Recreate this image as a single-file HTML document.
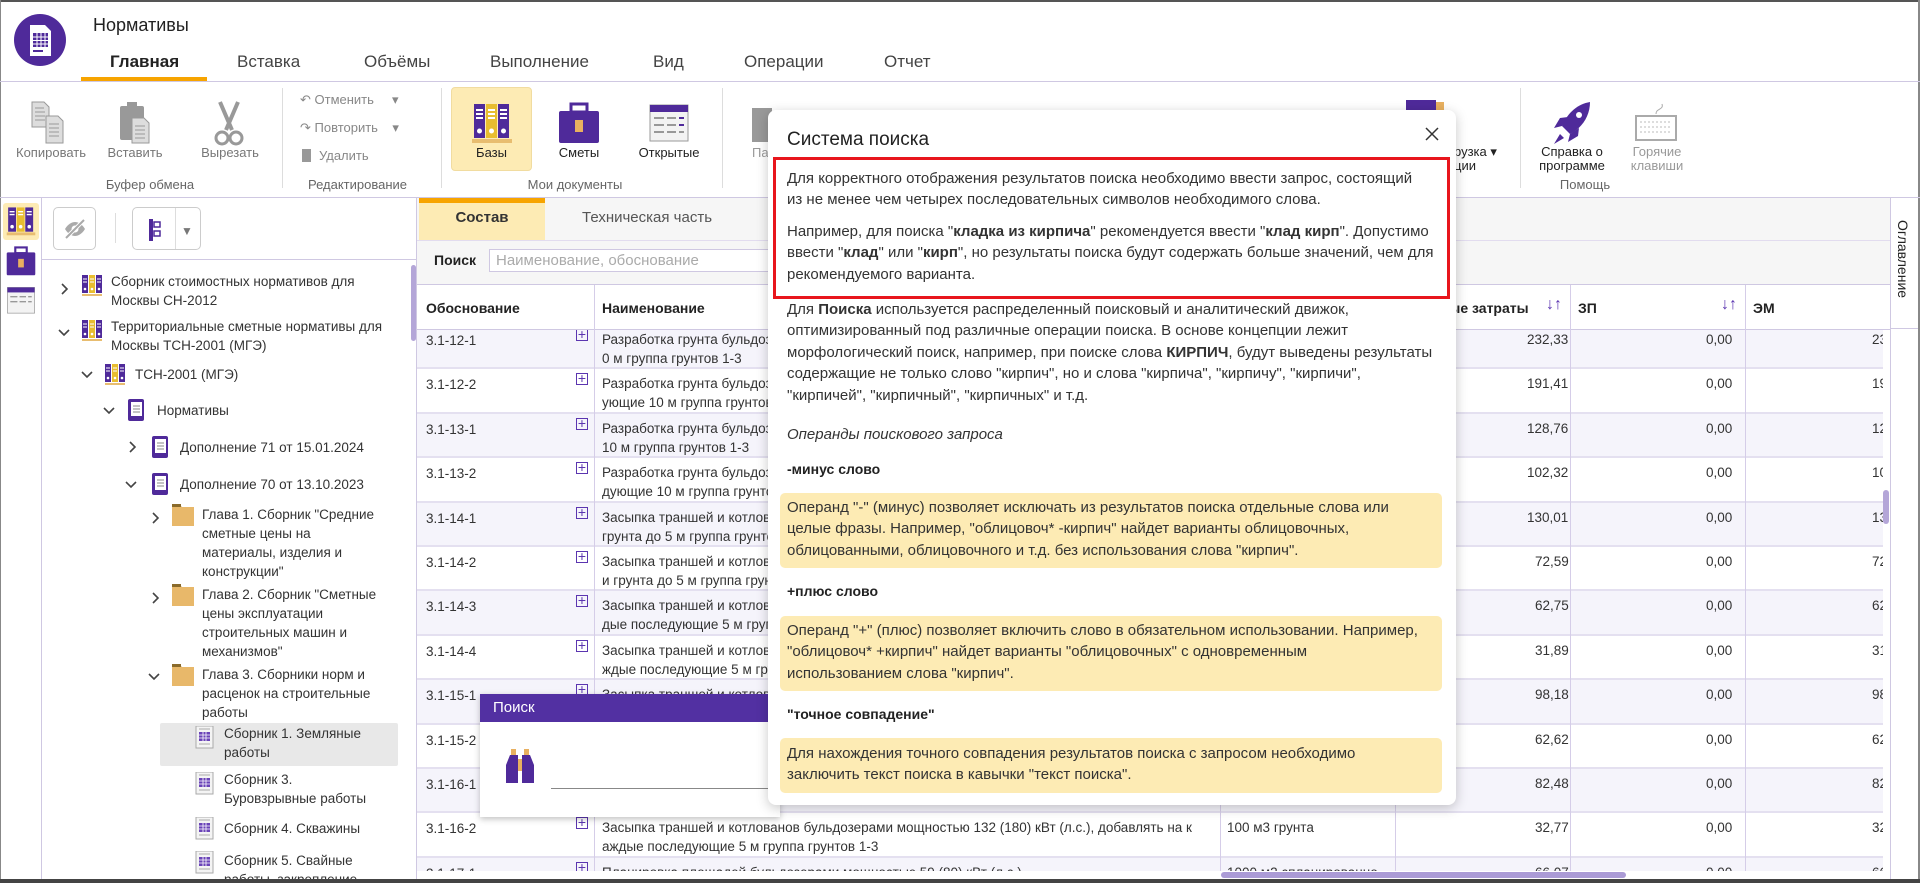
<!DOCTYPE html>
<html><head><meta charset="utf-8">
<style>
*{box-sizing:border-box;margin:0;padding:0}
body{width:1920px;height:883px;overflow:hidden;background:#fff;font-family:"Liberation Sans",sans-serif;color:#333;position:relative}
.a{position:absolute;white-space:nowrap}
.rl{font-size:13px;color:#777;text-align:center}
.gl{font-size:13px;color:#666;text-align:center}
.tab{font-size:17px;color:#444;top:52px}
.tr{font-size:13.5px;color:#333;line-height:19px;white-space:normal}
.cell{font-size:13.5px;color:#333;line-height:19px}
.dt{font-size:15px;color:#333;line-height:21.4px;white-space:normal}
.yb{position:absolute;left:780px;width:662px;background:#fdebb4;border-radius:5px;padding:0 16px 0 7px}
.hd{font-size:14px;font-weight:bold;color:#222}
.pl{position:absolute;left:159px;top:4px;color:#5b35b0;font-size:14px;border:1px solid #5b35b0;width:12px;height:12px;line-height:9px;text-align:center}
</style></head><body>
<div class="a" style="left:0;top:0;width:1920px;height:2px;background:#555"></div>
<div class="a" style="left:0;top:0;width:1px;height:883px;background:#888"></div>
<div class="a" style="left:1918px;top:0;width:2px;height:883px;background:#888"></div>
<div class="a" style="left:0;top:879px;width:1920px;height:4px;background:#444"></div>

<svg class="a" style="left:13px;top:13px" width="54" height="54" viewBox="0 0 54 54">
<circle cx="27" cy="27" r="26" fill="#4f2a9a"/>
<path d="M17 12h15l6 6v25h-21z" fill="#fff"/>
<rect x="20" y="20" width="15" height="14" fill="#4f2a9a"/>
<g stroke="#fff" stroke-width="1"><path d="M20 24h15M20 27.5h15M20 31h15M24 20v14M28 20v14M32 20v14"/></g>
<rect x="20" y="37" width="10" height="2" fill="#4f2a9a"/>
</svg>
<div class="a" style="left:93px;top:15px;font-size:18px;color:#222">Нормативы</div>
<div class="a tab" style="left:110px;font-weight:bold;color:#222">Главная</div>
<div class="a" style="left:81px;top:77px;width:126px;height:4px;background:#f7a400"></div>
<div class="a tab" style="left:237px">Вставка</div>
<div class="a tab" style="left:364px">Объёмы</div>
<div class="a tab" style="left:490px">Выполнение</div>
<div class="a tab" style="left:653px">Вид</div>
<div class="a tab" style="left:744px">Операции</div>
<div class="a tab" style="left:884px">Отчет</div>
<div class="a" style="left:0;top:81px;width:1920px;height:1px;background:#cfc8e2"></div>

<svg class="a" style="left:30px;top:100px" width="42" height="48" viewBox="0 0 42 48"><path d="M2 2h12l5 5v20H2z" fill="#ddd" stroke="#999"/><path d="M16 16h12l5 5v22H16z" fill="#ddd" stroke="#999"/><path d="M5 8h9M5 12h10M5 16h10M5 20h10M19 24h10M19 28h10M19 32h10M19 36h10" stroke="#999"/></svg>
<div class="a rl" style="left:10px;top:145px;width:82px">Копировать</div>
<svg class="a" style="left:116px;top:100px" width="38" height="48" viewBox="0 0 38 48"><rect x="4" y="6" width="24" height="34" rx="2" fill="#999"/><rect x="11" y="2" width="10" height="7" fill="#999"/><path d="M16 18h12l5 5v20H16z" fill="#ddd" stroke="#999"/><path d="M19 26h10M19 30h10M19 34h10M19 38h10" stroke="#999"/></svg>
<div class="a rl" style="left:100px;top:145px;width:70px">Вставить</div>
<svg class="a" style="left:212px;top:100px" width="34" height="48" viewBox="0 0 34 48"><path d="M8 2l12 28M26 2L14 30" stroke="#999" stroke-width="4"/><circle cx="10" cy="38" r="6" fill="none" stroke="#999" stroke-width="3"/><circle cx="24" cy="38" r="6" fill="none" stroke="#999" stroke-width="3"/></svg>
<div class="a rl" style="left:190px;top:145px;width:80px">Вырезать</div>
<div class="a gl" style="left:60px;top:177px;width:180px">Буфер обмена</div>
<div class="a" style="left:282px;top:88px;width:1px;height:100px;background:#ddd"></div>
<div class="a rl" style="left:300px;top:92px;text-align:left;color:#888">↶ Отменить &nbsp;&nbsp;&nbsp;&nbsp;▾</div>
<div class="a rl" style="left:300px;top:120px;text-align:left;color:#888">↷ Повторить &nbsp;&nbsp;&nbsp;▾</div>
<div class="a rl" style="left:302px;top:148px;text-align:left;color:#888"><span style="display:inline-block;width:9px;height:13px;background:#999;margin-right:8px;vertical-align:-2px"></span>Удалить</div>
<div class="a gl" style="left:300px;top:177px;width:115px">Редактирование</div>
<div class="a" style="left:441px;top:88px;width:1px;height:100px;background:#ddd"></div>
<div class="a" style="left:451px;top:87px;width:81px;height:84px;background:#fdebb4;border:1px solid #f1dca0;border-radius:4px"></div>
<svg class="a" style="left:472px;top:102px" width="40" height="42" viewBox="0 0 40 42"><rect x="2" y="2" width="11" height="34" fill="#4f2a9a"/><rect x="14" y="2" width="11" height="34" fill="#e8bd30"/><rect x="26" y="2" width="11" height="34" fill="#4f2a9a"/><path d="M4 8h7M4 12h7M4 16h7M16 8h7M16 12h7M16 16h7M28 8h7M28 12h7M28 16h7" stroke="#fff" stroke-width="2"/><circle cx="7.5" cy="29" r="2.5" fill="#fff"/><circle cx="19.5" cy="29" r="2.5" fill="#fff"/><circle cx="31.5" cy="29" r="2.5" fill="#fff"/><rect x="0" y="37" width="40" height="4" fill="#e8bd70"/></svg>
<div class="a rl" style="left:451px;top:145px;width:81px;color:#222">Базы</div>
<svg class="a" style="left:558px;top:102px" width="42" height="42" viewBox="0 0 42 42"><rect x="13" y="2" width="16" height="8" fill="none" stroke="#4f2a9a" stroke-width="3"/><rect x="1" y="9" width="40" height="32" rx="2" fill="#4f2a9a"/><rect x="17" y="18" width="8" height="12" fill="#e8b060"/></svg>
<div class="a rl" style="left:549px;top:145px;width:60px;color:#222">Сметы</div>
<svg class="a" style="left:648px;top:103px" width="42" height="42" viewBox="0 0 42 42"><rect x="2" y="2" width="38" height="36" fill="#f3f3f3" stroke="#999"/><rect x="2" y="2" width="38" height="7" fill="#4f2a9a"/><path d="M6 15h10M19 15h9M31 15h5M6 22h10M19 22h9M31 22h5M6 29h10M19 29h9M31 29h5" stroke="#999" stroke-width="2"/><path d="M31 15h5M31 22h5" stroke="#4f2a9a" stroke-width="2"/></svg>
<div class="a rl" style="left:630px;top:145px;width:78px;color:#222">Открытые</div>
<div class="a gl" style="left:500px;top:177px;width:150px">Мои документы</div>
<div class="a" style="left:722px;top:88px;width:1px;height:100px;background:#ddd"></div>
<svg class="a" style="left:752px;top:102px" width="20" height="40"><rect x="0" y="6" width="20" height="34" fill="#999"/></svg>
<div class="a rl" style="left:752px;top:145px;color:#999">Па</div>
<div class="a rl" style="left:1454px;top:145px;text-align:left;color:#222;line-height:14px">рузка ▾<br>ции</div>
<svg class="a" style="left:1406px;top:100px" width="40" height="20"><rect x="0" y="0" width="30" height="20" fill="#4f2a9a"/><rect x="30" y="2" width="8" height="18" fill="#e8b060"/></svg>
<div class="a" style="left:1520px;top:88px;width:1px;height:100px;background:#ddd"></div>
<svg class="a" style="left:1550px;top:100px" width="44" height="46" viewBox="0 0 44 46"><path d="M40 2C28 4 18 12 12 26l8 8C32 28 40 16 40 2z" fill="#4f2a9a"/><path d="M12 26l-8 2 6-10 8-1zM20 34l-2 8 10-6 1-8z" fill="#4f2a9a"/><path d="M10 34l-6 10 10-6z" fill="#4f2a9a"/><circle cx="29" cy="15" r="3" fill="#fff"/></svg>
<div class="a rl" style="left:1532px;top:145px;width:80px;color:#222;line-height:14px">Справка о<br>программе</div>
<svg class="a" style="left:1634px;top:102px" width="44" height="40" viewBox="0 0 44 40"><path d="M22 12c0-6 8-4 6-10" stroke="#aaa" fill="none"/><rect x="2" y="14" width="40" height="24" fill="none" stroke="#aaa" stroke-width="2"/><path d="M6 20h32M6 25h32M6 30h32" stroke="#bbb" stroke-dasharray="2 2"/></svg>
<div class="a rl" style="left:1620px;top:145px;width:74px;color:#999;line-height:14px">Горячие<br>клавиши</div>
<div class="a gl" style="left:1545px;top:177px;width:80px">Помощь</div>
<div class="a" style="left:0;top:197px;width:1920px;height:1px;background:#cfc8e2"></div>

<div class="a" style="left:41px;top:198px;width:1px;height:681px;background:#cfc8e2"></div>
<div class="a" style="left:3px;top:203px;width:36px;height:37px;background:#fdebb4;border-radius:3px"></div>
<svg class="a" style="left:6px;top:206px" width="30" height="30" viewBox="0 0 40 42"><rect x="2" y="2" width="11" height="34" fill="#4f2a9a"/><rect x="14" y="2" width="11" height="34" fill="#e8bd30"/><rect x="26" y="2" width="11" height="34" fill="#4f2a9a"/><path d="M4 8h7M4 12h7M16 8h7M16 12h7M28 8h7M28 12h7" stroke="#fff" stroke-width="2"/><circle cx="7.5" cy="29" r="2.5" fill="#fff"/><circle cx="19.5" cy="29" r="2.5" fill="#fff"/><circle cx="31.5" cy="29" r="2.5" fill="#fff"/><rect x="0" y="37" width="40" height="4" fill="#e8bd70"/></svg>
<svg class="a" style="left:5px;top:246px" width="32" height="30" viewBox="0 0 42 42"><rect x="13" y="2" width="16" height="8" fill="none" stroke="#4f2a9a" stroke-width="3"/><rect x="1" y="9" width="40" height="32" rx="2" fill="#4f2a9a"/><rect x="17" y="18" width="8" height="12" fill="#e8b060"/></svg>
<svg class="a" style="left:5px;top:286px" width="32" height="30" viewBox="0 0 42 42"><rect x="2" y="2" width="38" height="36" fill="#f3f3f3" stroke="#999"/><rect x="2" y="2" width="38" height="7" fill="#4f2a9a"/><path d="M6 15h10M19 15h9M31 15h5M6 22h10M19 22h9M31 22h5" stroke="#999" stroke-width="2"/></svg>

<div class="a" style="left:53px;top:207px;width:43px;height:43px;border:1px solid #ccc;border-radius:5px"></div>
<svg class="a" style="left:62px;top:216px" width="26" height="26" viewBox="0 0 26 26"><path d="M3 13c3-5 7-7 10-7s7 2 10 7c-3 5-7 7-10 7s-7-2-10-7z" fill="#aaa"/><circle cx="13" cy="13" r="3.5" fill="#fff"/><path d="M4 22L22 4" stroke="#fff" stroke-width="4"/><path d="M4 22L22 4" stroke="#aaa" stroke-width="2"/></svg>
<div class="a" style="left:115px;top:213px;width:1px;height:30px;background:#ddd"></div>
<div class="a" style="left:132px;top:207px;width:69px;height:43px;border:1px solid #ccc;border-radius:5px"></div>
<div class="a" style="left:175px;top:208px;width:1px;height:41px;background:#ddd"></div>
<svg class="a" style="left:148px;top:218px" width="14" height="24"><rect x="1" y="1" width="4" height="22" fill="#4f2a9a"/><rect x="6" y="4" width="6" height="5" fill="none" stroke="#4f2a9a" stroke-width="1.5"/><rect x="6" y="13" width="6" height="5" fill="none" stroke="#4f2a9a" stroke-width="1.5"/></svg>
<div class="a" style="left:181px;top:224px;font-size:12px;color:#777">▼</div>
<div class="a" style="left:42px;top:259px;width:375px;height:1px;background:#cfc8e2"></div>
<div class="a" style="left:411px;top:265px;width:5px;height:76px;background:#b4a6d8;border-radius:3px"></div>
<div class="a" style="left:416px;top:198px;width:1px;height:681px;background:#cfc8e2"></div>

<svg width="0" height="0" style="position:absolute"><defs>
<g id="db"><rect x="0" y="0" width="6" height="18" fill="#4f2a9a"/><rect x="7" y="0" width="6" height="18" fill="#e8bd30"/><rect x="14" y="0" width="6" height="18" fill="#4f2a9a"/><path d="M1 4h4M8 4h4M15 4h4M1 7h4M8 7h4M15 7h4" stroke="#fff"/><circle cx="3" cy="14" r="1.3" fill="#fff"/><circle cx="10" cy="14" r="1.3" fill="#fff"/><circle cx="17" cy="14" r="1.3" fill="#fff"/><rect x="0" y="19" width="20" height="2" fill="#e8bd70"/></g>
<g id="bk"><rect x="2" y="0" width="16" height="22" rx="2" fill="#4f2a9a"/><rect x="5" y="3" width="11" height="14" fill="#fff"/><path d="M7 7h7M7 10h7M7 13h7" stroke="#888"/></g>
<g id="fd"><path d="M0 3h8l2 2h12v19H0z" fill="#e8b86a"/><rect x="0" y="2" width="9" height="3" fill="#8a6a2a"/></g>
<g id="sb"><rect x="1" y="0" width="17" height="22" fill="#f4f4f4" stroke="#aaa"/><rect x="4" y="6" width="11" height="9" fill="#6a44b8"/><path d="M4 9h11M4 12h11M8 6v9M11 6v9" stroke="#fff" stroke-width=".8"/><path d="M4 3h11M4 18h11" stroke="#aaa"/></g>
<path id="cr" d="M2 1l5 5-5 5" fill="none" stroke="#444" stroke-width="1.6"/>
<path id="cd" d="M1 2l5 5 5-5" fill="none" stroke="#444" stroke-width="1.6"/>
</defs></svg>

<svg class="a" style="left:60px;top:283px" width="12" height="12"><use href="#cr"/></svg>
<svg class="a" style="left:82px;top:275px" width="22" height="22"><use href="#db"/></svg>
<div class="a tr" style="left:111px;top:272px;width:290px">Сборник стоимостных нормативов для Москвы СН-2012</div>
<svg class="a" style="left:58px;top:328px" width="12" height="12"><use href="#cd"/></svg>
<svg class="a" style="left:82px;top:320px" width="22" height="22"><use href="#db"/></svg>
<div class="a tr" style="left:111px;top:317px;width:290px">Территориальные сметные нормативы для Москвы ТСН-2001 (МГЭ)</div>
<svg class="a" style="left:81px;top:370px" width="12" height="12"><use href="#cd"/></svg>
<svg class="a" style="left:105px;top:364px" width="22" height="22"><use href="#db"/></svg>
<div class="a tr" style="left:135px;top:365px">ТСН-2001 (МГЭ)</div>
<svg class="a" style="left:103px;top:406px" width="12" height="12"><use href="#cd"/></svg>
<svg class="a" style="left:126px;top:399px" width="22" height="24"><use href="#bk"/></svg>
<div class="a tr" style="left:157px;top:401px">Нормативы</div>
<svg class="a" style="left:128px;top:441px" width="12" height="12"><use href="#cr"/></svg>
<svg class="a" style="left:150px;top:436px" width="22" height="24"><use href="#bk"/></svg>
<div class="a tr" style="left:180px;top:438px">Дополнение 71 от 15.01.2024</div>
<svg class="a" style="left:125px;top:480px" width="12" height="12"><use href="#cd"/></svg>
<svg class="a" style="left:150px;top:473px" width="22" height="24"><use href="#bk"/></svg>
<div class="a tr" style="left:180px;top:475px">Дополнение 70 от 13.10.2023</div>
<svg class="a" style="left:151px;top:512px" width="12" height="12"><use href="#cr"/></svg>
<svg class="a" style="left:172px;top:502px" width="22" height="26"><use href="#fd"/></svg>
<div class="a tr" style="left:202px;top:505px;width:180px">Глава 1. Сборник "Средние сметные цены на материалы, изделия и конструкции"</div>
<svg class="a" style="left:151px;top:592px" width="12" height="12"><use href="#cr"/></svg>
<svg class="a" style="left:172px;top:582px" width="22" height="26"><use href="#fd"/></svg>
<div class="a tr" style="left:202px;top:585px;width:180px">Глава 2. Сборник "Сметные цены эксплуатации строительных машин и механизмов"</div>
<svg class="a" style="left:148px;top:672px" width="12" height="12"><use href="#cd"/></svg>
<svg class="a" style="left:172px;top:662px" width="22" height="26"><use href="#fd"/></svg>
<div class="a tr" style="left:202px;top:665px;width:185px">Глава 3. Сборники норм и расценок на строительные работы</div>
<div class="a" style="left:160px;top:723px;width:238px;height:43px;background:#e8e8e8;border-radius:2px"></div>
<svg class="a" style="left:195px;top:726px" width="20" height="24"><use href="#sb"/></svg>
<div class="a tr" style="left:224px;top:724px;width:160px">Сборник 1. Земляные работы</div>
<svg class="a" style="left:195px;top:772px" width="20" height="24"><use href="#sb"/></svg>
<div class="a tr" style="left:224px;top:770px;width:160px">Сборник 3. Буровзрывные работы</div>
<svg class="a" style="left:195px;top:817px" width="20" height="24"><use href="#sb"/></svg>
<div class="a tr" style="left:224px;top:819px">Сборник 4. Скважины</div>
<svg class="a" style="left:195px;top:851px" width="20" height="24"><use href="#sb"/></svg>
<div class="a tr" style="left:224px;top:851px;width:160px;height:28px;overflow:hidden">Сборник 5. Свайные работы, закрепление</div>

<div class="a" style="left:417px;top:198px;width:1473px;height:131px;background:#f6f6f6"></div>
<div class="a" style="left:419px;top:198px;width:126px;height:42px;background:#fdebb4;border-top:5px solid #f7a400"></div>
<div class="a" style="left:419px;top:209px;width:126px;text-align:center;font-size:15px;font-weight:bold;color:#333">Состав</div>
<div class="a" style="left:582px;top:209px;font-size:15px;color:#555">Техническая часть</div>
<div class="a" style="left:417px;top:240px;width:1473px;height:1px;background:#e2dcef"></div>
<div class="a" style="left:434px;top:252px;font-size:14px;font-weight:bold;color:#222">Поиск</div>
<div class="a" style="left:489px;top:249px;width:300px;height:23px;border:1px solid #cfc8e2;background:#fff;padding:2px 6px;font-size:15px;color:#aaa">Наименование, обоснование</div>
<div class="a" style="left:417px;top:284px;width:1473px;height:1px;background:#cfc8e2"></div>
<div class="a" style="left:417px;top:285px;width:1473px;height:45px;background:#fff"></div>
<div class="a" style="left:426px;top:300px;font-size:14px;font-weight:bold;color:#222">Обоснование</div>
<div class="a" style="left:602px;top:300px;font-size:14px;font-weight:bold;color:#222">Наименование</div>
<div class="a" style="left:1405px;top:300px;font-size:14px;font-weight:bold;color:#222">Сметные затраты</div>
<div class="a" style="left:1546px;top:296px;font-size:16px;font-weight:bold;color:#5b35b0">↓↑</div>
<div class="a" style="left:1578px;top:300px;font-size:14px;font-weight:bold;color:#222">ЗП</div>
<div class="a" style="left:1721px;top:296px;font-size:16px;font-weight:bold;color:#5b35b0">↓↑</div>
<div class="a" style="left:1753px;top:300px;font-size:14px;font-weight:bold;color:#222">ЭМ</div>
<div class="a" style="left:417px;top:329px;width:1473px;height:1px;background:#cfc8e2"></div>

<div class="a" style="left:417px;top:330px;width:1466px;height:541px;overflow:hidden">
<div style="position:absolute;left:0;top:-5px;width:1466px">
<div style="position:relative;height:44.4px;background:#f5f4fb;border-bottom:2px solid #e4e0f0"><span class="a cell" style="left:9px;top:6px">3.1-12-1</span><span class="pl">+</span><span class="a cell" style="left:185px;top:5px">Разработка грунта бульдозерами мощностью 59 (80) кВт (л.с.) с перемещением грунта до 1<br>0 м группа грунтов 1-3</span><span class="a cell" style="left:810px;top:5px">1000 м3 грунта</span><span class="a cell" style="left:1110px;top:5px">232,33</span><span class="a cell" style="left:1289px;top:5px">0,00</span><span class="a cell" style="left:1455px;top:5px">232,33</span></div>
<div style="position:relative;height:44.4px;background:#fff;border-bottom:2px solid #e4e0f0"><span class="a cell" style="left:9px;top:6px">3.1-12-2</span><span class="pl">+</span><span class="a cell" style="left:185px;top:5px">Разработка грунта бульдозерами мощностью 59 (80) кВт (л.с.), добавлять на каждые послед<br>ующие 10 м группа грунтов 1-3</span><span class="a cell" style="left:1110px;top:5px">191,41</span><span class="a cell" style="left:1289px;top:5px">0,00</span><span class="a cell" style="left:1455px;top:5px">191,41</span></div>
<div style="position:relative;height:44.4px;background:#f5f4fb;border-bottom:2px solid #e4e0f0"><span class="a cell" style="left:9px;top:6px">3.1-13-1</span><span class="pl">+</span><span class="a cell" style="left:185px;top:5px">Разработка грунта бульдозерами мощностью 79 (108) кВт (л.с.) с перемещением грунта до<br>10 м группа грунтов 1-3</span><span class="a cell" style="left:1110px;top:5px">128,76</span><span class="a cell" style="left:1289px;top:5px">0,00</span><span class="a cell" style="left:1455px;top:5px">128,76</span></div>
<div style="position:relative;height:44.4px;background:#fff;border-bottom:2px solid #e4e0f0"><span class="a cell" style="left:9px;top:6px">3.1-13-2</span><span class="pl">+</span><span class="a cell" style="left:185px;top:5px">Разработка грунта бульдозерами мощностью 79 (108) кВт (л.с.), добавлять на каждые после<br>дующие 10 м группа грунтов 1-3</span><span class="a cell" style="left:1110px;top:5px">102,32</span><span class="a cell" style="left:1289px;top:5px">0,00</span><span class="a cell" style="left:1455px;top:5px">102,32</span></div>
<div style="position:relative;height:44.4px;background:#f5f4fb;border-bottom:2px solid #e4e0f0"><span class="a cell" style="left:9px;top:6px">3.1-14-1</span><span class="pl">+</span><span class="a cell" style="left:185px;top:5px">Засыпка траншей и котлованов бульдозерами мощностью 59 (80) кВт (л.с.) с перемещение<br>грунта до 5 м группа грунтов 1-3</span><span class="a cell" style="left:1110px;top:5px">130,01</span><span class="a cell" style="left:1289px;top:5px">0,00</span><span class="a cell" style="left:1455px;top:5px">130,01</span></div>
<div style="position:relative;height:44.4px;background:#fff;border-bottom:2px solid #e4e0f0"><span class="a cell" style="left:9px;top:6px">3.1-14-2</span><span class="pl">+</span><span class="a cell" style="left:185px;top:5px">Засыпка траншей и котлованов бульдозерами мощностью 59 (80) кВт (л.с.) с перемещение<br>и грунта до 5 м группа грунтов 1-3</span><span class="a cell" style="left:1118px;top:5px">72,59</span><span class="a cell" style="left:1289px;top:5px">0,00</span><span class="a cell" style="left:1455px;top:5px">72,59</span></div>
<div style="position:relative;height:44.4px;background:#f5f4fb;border-bottom:2px solid #e4e0f0"><span class="a cell" style="left:9px;top:6px">3.1-14-3</span><span class="pl">+</span><span class="a cell" style="left:185px;top:5px">Засыпка траншей и котлованов бульдозерами мощностью 59 (80) кВт (л.с.), добавлять на каж<br>дые последующие 5 м группа грунтов 1-3</span><span class="a cell" style="left:1118px;top:5px">62,75</span><span class="a cell" style="left:1289px;top:5px">0,00</span><span class="a cell" style="left:1455px;top:5px">62,75</span></div>
<div style="position:relative;height:44.4px;background:#fff;border-bottom:2px solid #e4e0f0"><span class="a cell" style="left:9px;top:6px">3.1-14-4</span><span class="pl">+</span><span class="a cell" style="left:185px;top:5px">Засыпка траншей и котлованов бульдозерами мощностью 59 (80) кВт (л.с.), добавлять на ка<br>ждые последующие 5 м группа грунтов 1-3</span><span class="a cell" style="left:1118px;top:5px">31,89</span><span class="a cell" style="left:1289px;top:5px">0,00</span><span class="a cell" style="left:1455px;top:5px">31,89</span></div>
<div style="position:relative;height:44.4px;background:#f5f4fb;border-bottom:2px solid #e4e0f0"><span class="a cell" style="left:9px;top:6px">3.1-15-1</span><span class="pl">+</span><span class="a cell" style="left:185px;top:5px">Засыпка траншей и котлованов бульдозерами мощностью 79 (108) кВт (л.с.)</span><span class="a cell" style="left:1118px;top:5px">98,18</span><span class="a cell" style="left:1289px;top:5px">0,00</span><span class="a cell" style="left:1455px;top:5px">98,18</span></div>
<div style="position:relative;height:44.4px;background:#fff;border-bottom:2px solid #e4e0f0"><span class="a cell" style="left:9px;top:6px">3.1-15-2</span><span class="a cell" style="left:1118px;top:5px">62,62</span><span class="a cell" style="left:1289px;top:5px">0,00</span><span class="a cell" style="left:1455px;top:5px">62,62</span></div>
<div style="position:relative;height:44.4px;background:#f5f4fb;border-bottom:2px solid #e4e0f0"><span class="a cell" style="left:9px;top:6px">3.1-16-1</span><span class="a cell" style="left:1118px;top:5px">82,48</span><span class="a cell" style="left:1289px;top:5px">0,00</span><span class="a cell" style="left:1455px;top:5px">82,48</span></div>
<div style="position:relative;height:44.4px;background:#fff;border-bottom:2px solid #e4e0f0"><span class="a cell" style="left:9px;top:6px">3.1-16-2</span><span class="pl">+</span><span class="a cell" style="left:185px;top:5px">Засыпка траншей и котлованов бульдозерами мощностью 132 (180) кВт (л.с.), добавлять на к<br>аждые последующие 5 м группа грунтов 1-3</span><span class="a cell" style="left:810px;top:5px">100 м3 грунта</span><span class="a cell" style="left:1118px;top:5px">32,77</span><span class="a cell" style="left:1289px;top:5px">0,00</span><span class="a cell" style="left:1455px;top:5px">32,77</span></div>
<div style="position:relative;height:44.4px;background:#f5f4fb"><span class="a cell" style="left:9px;top:6px">3.1-17-1</span><span class="pl">+</span><span class="a cell" style="left:185px;top:5px">Планировка площадей бульдозерами мощностью 59 (80) кВт (л.с.)</span><span class="a cell" style="left:810px;top:5px">1000 м2 спланированно</span><span class="a cell" style="left:1118px;top:5px">66,07</span><span class="a cell" style="left:1289px;top:5px">0,00</span><span class="a cell" style="left:1455px;top:5px">66,07</span></div>
</div>
</div>
<div class="a" style="left:594px;top:285px;width:1px;height:586px;background:#d5cde8"></div>
<div class="a" style="left:1220px;top:285px;width:1px;height:586px;background:#d5cde8"></div>
<div class="a" style="left:1395px;top:285px;width:1px;height:586px;background:#d5cde8"></div>
<div class="a" style="left:1570px;top:285px;width:1px;height:586px;background:#d5cde8"></div>
<div class="a" style="left:1745px;top:285px;width:1px;height:586px;background:#d5cde8"></div>
<div class="a" style="left:1883px;top:490px;width:6px;height:34px;background:#b4a6d8;border-radius:3px"></div>
<div class="a" style="left:417px;top:871px;width:1473px;height:8px;background:#fff"></div>
<div class="a" style="left:1221px;top:872px;width:405px;height:6px;background:#ab9bd6;border-radius:3px"></div>
<div class="a" style="left:1890px;top:198px;width:1px;height:681px;background:#cfc8e2"></div>
<div class="a" style="left:1890px;top:328px;width:28px;height:1px;background:#cfc8e2"></div>
<div class="a" style="left:1895px;top:220px;font-size:14px;color:#222;writing-mode:vertical-rl">Оглавление</div>

<div class="a" style="left:480px;top:694px;width:300px;height:123px;background:#fff;box-shadow:0 2px 6px rgba(0,0,0,.25)"></div>
<div class="a" style="left:480px;top:694px;width:300px;height:28px;background:#5230a2"></div>
<div class="a" style="left:493px;top:699px;font-size:15px;color:#fff">Поиск</div>
<svg class="a" style="left:504px;top:749px" width="32" height="36" viewBox="0 0 32 36"><rect x="7" y="0" width="5" height="6" fill="#e8b060"/><rect x="20" y="0" width="5" height="6" fill="#e8b060"/><path d="M6 6h8v28H2V16z M18 6h8l4 10v18H18z" fill="#4f2a9a"/><rect x="14" y="10" width="4" height="12" fill="#e8b060"/></svg>
<div class="a" style="left:551px;top:788px;width:229px;height:1px;background:#888"></div>

<div class="a" style="left:768px;top:110px;width:688px;height:695px;background:#fff;border-radius:8px;box-shadow:0 3px 12px rgba(0,0,0,.22)"></div>
<div class="a" style="left:787px;top:129px;font-size:19px;color:#222">Система поиска</div>
<svg class="a" style="left:1424px;top:126px" width="16" height="16"><path d="M2 2l12 12M14 2L2 14" stroke="#333" stroke-width="1.5"/></svg>
<div class="a" style="left:773px;top:157px;width:677px;height:142px;border:3px solid #e8161c"></div>
<div class="a dt" style="left:787px;top:168px;width:634px">Для корректного отображения результатов поиска необходимо ввести запрос, состоящий из не менее чем четырех последовательных символов необходимого слова.</div>
<div class="a dt" style="left:787px;top:221px;width:655px">Например, для поиска "<b>кладка из кирпича</b>" рекомендуется ввести "<b>клад кирп</b>". Допустимо ввести "<b>клад</b>" или "<b>кирп</b>", но результаты поиска будут содержать больше значений, чем для рекомендуемого варианта.</div>
<div class="a dt" style="left:787px;top:299px;width:656px">Для <b>Поиска</b> используется распределенный поисковый и аналитический движок, оптимизированный под различные операции поиска. В основе концепции лежит морфологический поиск, например, при поиске слова <b>КИРПИЧ</b>, будут выведены результаты содержащие не только слово "кирпич", но и слова "кирпича", "кирпичу", "кирпичи", "кирпичей", "кирпичный", "кирпичных" и т.д.</div>
<div class="a dt" style="left:787px;top:424px;font-style:italic">Операнды поискового запроса</div>
<div class="a hd" style="left:787px;top:461px">-минус слово</div>
<div class="yb dt" style="top:493px;height:75px;padding-top:4px">Операнд "-" (минус) позволяет исключать из результатов поиска отдельные слова или целые фразы. Например, "облицовоч* -кирпич" найдет варианты облицовочных, облицованными, облицовочного и т.д. без использования слова "кирпич".</div>
<div class="a hd" style="left:787px;top:583px">+плюс слово</div>
<div class="yb dt" style="top:616px;height:75px;padding-top:4px">Операнд "+" (плюс) позволяет включить слово в обязательном использовании. Например, "облицовоч* +кирпич" найдет варианты "облицовочных" с одновременным использованием слова "кирпич".</div>
<div class="a hd" style="left:787px;top:706px">"точное совпадение"</div>
<div class="yb dt" style="top:738px;height:55px;padding-top:5px">Для нахождения точного совпадения результатов поиска с запросом необходимо заключить текст поиска в кавычки "текст поиска".</div>
</body></html>
